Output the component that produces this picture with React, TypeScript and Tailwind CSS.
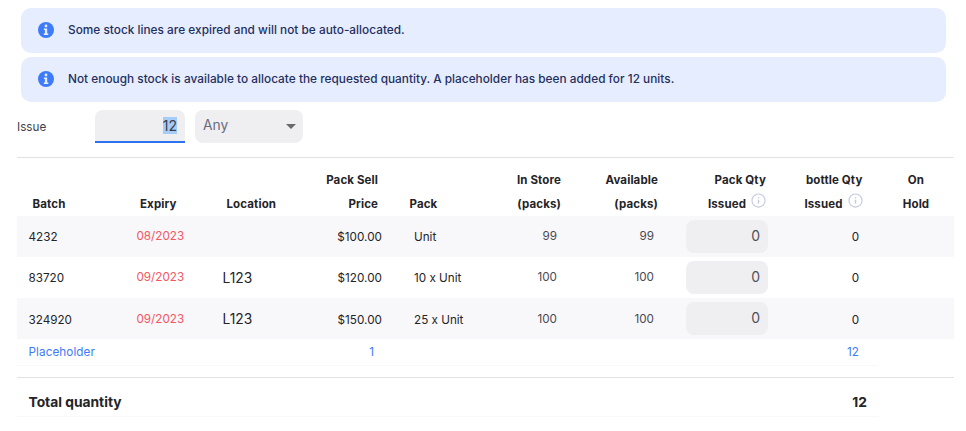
import type { ReactNode } from 'react';

const COLS =
  'grid grid-cols-[113px_82px_90px_92px_96px_85px_97px_108px_96px_78px]';

function Notice({ children }: { children: ReactNode }) {
  return (
    <div className="flex h-[45px] items-center rounded-[10px] bg-[#e6edfe] pl-[17px] text-[11.8px] font-medium tracking-[0.025px] text-[#1f2f5e]">
      <svg viewBox="0 0 16 16" className="mr-[14px] size-4 shrink-0">
        <circle cx="8" cy="8" r="8" fill="#3e7bfa" />
        <circle cx="8" cy="4" r="1.4" fill="#e6edfe" />
        <path d="M5.9 6.5h3.3v5h1.1v1.4H5.8v-1.4h1.1V7.9h-1z" fill="#e6edfe" />
      </svg>
      <span className="pt-[2px]">{children}</span>
    </div>
  );
}

function InfoIcon() {
  return (
    <svg
      viewBox="0 0 16 16"
      className="mb-[9px] ml-[5px] size-[15px]"
      fill="none"
      stroke="#c6c7e2"
    >
      <circle cx="8" cy="8" r="7" strokeWidth="1.2" />
      <path d="M8 7.2v4.1M8 4.4v1.5" strokeWidth="1.5" />
    </svg>
  );
}

function Head({ lines, className, info }: { lines: string[]; className: string; info?: boolean }) {
  return (
    <div className={`flex flex-col justify-end ${className}`}>
      {lines.map((line, i) => (
        <div key={line} className="flex h-[23.5px] items-center whitespace-nowrap last:pt-[1.5px]">
          {line}
          {info && i === lines.length - 1 && <InfoIcon />}
        </div>
      ))}
    </div>
  );
}

const rows = [
  { batch: '4232', expiry: '08/2023', location: '', price: '$100.00', pack: 'Unit', qty: '99' },
  { batch: '83720', expiry: '09/2023', location: 'L123', price: '$120.00', pack: '10 x Unit', qty: '100' },
  { batch: '324920', expiry: '09/2023', location: 'L123', price: '$150.00', pack: '25 x Unit', qty: '100' },
];

export default function App() {
  return (
    <div className="h-[431px] w-[966px] overflow-hidden bg-white font-['Inter',sans-serif] text-[11.7px] text-[#242428]">
      <div className="flex flex-col gap-1 pt-[7.5px] pr-5 pl-[21px]">
        <Notice>Some stock lines are expired and will not be auto-allocated.</Notice>
        <Notice>
          Not enough stock is available to allocate the requested quantity. A placeholder has been added for 12 units.
        </Notice>
      </div>

      <div className="flex h-[55.5px] items-start pt-[8.5px] pl-[17px]">
        <div className="w-[78px] pt-[8px] leading-[18px] text-[#3f3f4a]">Issue</div>
        <div className="flex h-[33px] w-[90px] items-center justify-end rounded-t-[8px] border-b-2 border-[#2f72f0] bg-[#efeff1] pr-2 text-[14px] text-[#3a3f50]">
          <span className="bg-[#a5cdf8] leading-[17px]">12</span>
        </div>
        <div className="ml-[10px] flex h-[33px] w-[108px] items-center justify-between rounded-[8px] bg-[#efeff1] pr-[7px] pl-2 text-[13.8px] text-[#6b6b80]">
          <span className="pb-[3px]">Any</span>
          <svg viewBox="0 0 10 5" className="h-[5px] w-[10px]">
            <path d="M0 0h10L5 5z" fill="#69696d" />
          </svg>
        </div>
      </div>

      <div className="ml-[17px] w-[937px]">
        <div className={`${COLS} h-[58.5px] border-t border-[#e2e2e6] text-[11.5px] font-bold tracking-[0.12px]`}>
          <Head lines={['Batch']} className="items-start pl-[15.5px]" />
          <Head lines={['Expiry']} className="items-start pl-[10px]" />
          <Head lines={['Location']} className="items-start pl-[14.5px]" />
          <Head lines={['Pack Sell', 'Price']} className="items-end pr-4" />
          <Head lines={['Pack']} className="items-start pl-[15.5px]" />
          <Head lines={['In Store', '(packs)']} className="items-end pr-[14px]" />
          <Head lines={['Available', '(packs)']} className="items-end pr-[14px]" />
          <Head lines={['Pack Qty', 'Issued']} className="items-end pr-[14px]" info />
          <Head lines={['bottle Qty', 'Issued']} className="items-end pr-[13.5px]" info />
          <Head lines={['On', 'Hold']} className="items-center pl-[2px]" />
        </div>

        {rows.map((row) => (
          <div key={row.batch} className={`${COLS} h-[41.25px] items-center odd:bg-white even:bg-[#f8f8fb]`}>
            <div className="pt-[3.5px] pl-[11.5px]">{row.batch}</div>
            <div className="pt-[1.5px] pl-[6.5px] text-[#f5565f]">{row.expiry}</div>
            <div className="pt-[1.5px] pl-[10.5px] text-[13.8px]">{row.location}</div>
            <div className="pt-[3.5px] pr-3 text-right tracking-[0.05px]">{row.price}</div>
            <div className="pt-[3.5px] pl-5">{row.pack}</div>
            <div className="pt-[1.5px] pr-[18px] text-right text-[#4a4a52]">{row.qty}</div>
            <div className="pt-[1.5px] pr-[18px] text-right text-[#4a4a52]">{row.qty}</div>
            <div className="ml-[14px] flex h-[33px] w-[82px] items-center justify-end rounded-[8px] bg-[#efeff1] pr-2 pb-[2px] text-[14px] text-[#4f4f58]">
              0
            </div>
            <div className="pt-[3.5px] pr-[17px] text-right">0</div>
            <div />
          </div>
        ))}

        <div className="flex h-[26.5px] w-[861px] items-center border-b border-[#f8f8f9] pt-[2px] text-[#3e7bfa]">
          <div className="w-[285px] pl-[11.5px] tracking-[0.09px]">Placeholder</div>
          <div className="w-[72px] text-right">1</div>
          <div className="flex-1 pr-[19px] text-right">12</div>
        </div>

        <div className="mt-[11px] border-t border-[#e2e2e6]">
          <div className="flex h-[39.5px] w-[861px] items-center justify-between border-b border-[#f8f8f9] pt-[11px] pr-[11px] pl-[11.5px] text-[13.8px] font-bold">
            <span>Total quantity</span>
            <span>12</span>
          </div>
        </div>
      </div>
    </div>
  );
}
